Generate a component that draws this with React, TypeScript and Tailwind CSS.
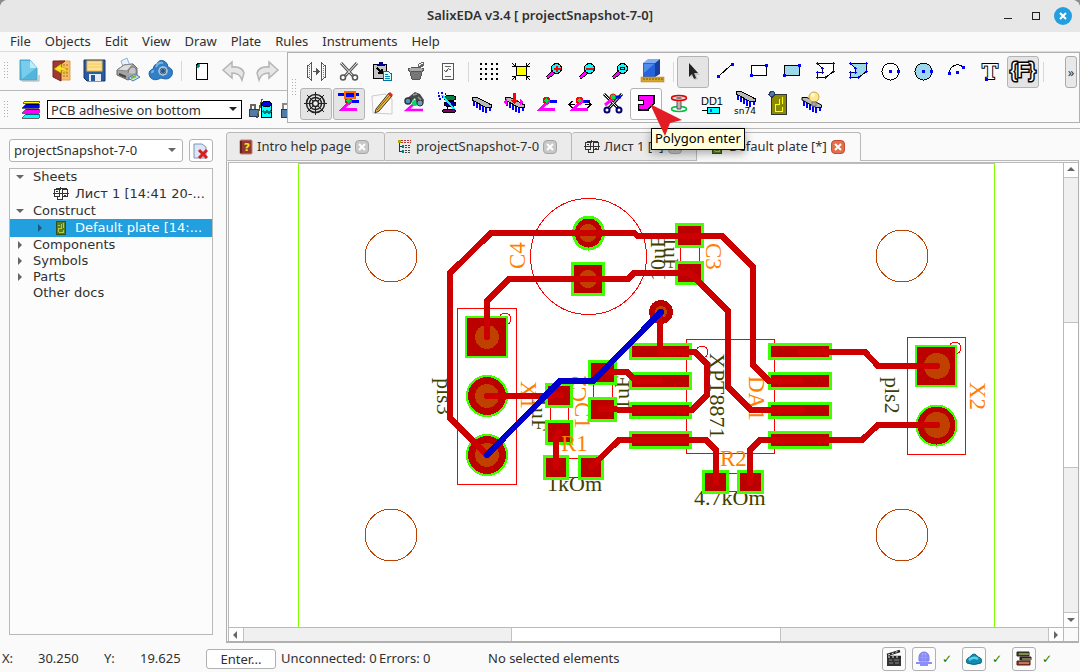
import type { ReactNode } from "react"

const menus = ["File", "Objects", "Edit", "View", "Draw", "Plate", "Rules", "Instruments", "Help"]

function Icon({ children, smooth = false }: { children: ReactNode; smooth?: boolean }) {
  return (
    <svg
      width="24"
      height="24"
      viewBox="0 0 24 24"
      fill="none"
      overflow="visible"
      shapeRendering={smooth ? "auto" : "crispEdges"}
      className="shrink-0"
      aria-hidden="true"
    >
      {children}
    </svg>
  )
}

function Dot({ x, y }: { x: number; y: number }) {
  return <rect x={x - 1} y={y - 1} width="3" height="3" fill="#0000ff" />
}

/* Two-segment track used as a base by the routing icons */
function Track() {
  return (
    <>
      <path d="M13 9.500H22" stroke="#0000ff" strokeWidth="3" />
      <path d="M20 17.500H5L13 10" stroke="#ff00ff" strokeWidth="3" />
      <circle cx="11.500" cy="8.500" r="3" fill="#00e040" stroke="#ff0000" strokeWidth="1.500" />
      <path d="M10 13L15 9" stroke="#ff00ff" strokeWidth="2" />
    </>
  )
}

function Chip() {
  return (
    <>
      <path d="M5 9v5M8 11v5M11 12v6M14 14v6M17 15v6M21 15v4" stroke="#0000ff" strokeWidth="2" />
      <path d="M3 5.500H8L22.500 13V15.500H17L3 8Z" fill="#b8b8b8" stroke="#000" />
    </>
  )
}

function Lens({ sign }: { sign: ReactNode }) {
  return (
    <>
      <path d="M5 18L12 11.500" stroke="#000" strokeWidth="4" />
      <path d="M5.500 17.500L12 11.500" stroke="#ff00ff" strokeWidth="2.600" />
      <circle cx="14.500" cy="8.500" r="5" fill="#00ffff" stroke="#000" />
      {sign}
    </>
  )
}

const fileIcons = [
  {
    name: "New project",
    icon: (
      <Icon smooth>
        <path d="M3 1H13L20 9V21H3Z" fill="#53b5dc" stroke="#4aa5ca" />
        <path d="M4 2H12L19 9L5 20Z" fill="#79cdec" />
        <path d="M13 1V9H20Z" fill="#c0ebf8" />
        <path d="M5 22H22V16" stroke="#aaa" strokeWidth="1" />
      </Icon>
    ),
  },
  {
    name: "Open project",
    icon: (
      <Icon smooth>
        <path d="M9 2H20V21H9Z" fill="#f5bd65" stroke="#dda15b" />
        <path d="M13 6H18M13 10H18M13 14H18M13 17H18" stroke="#b96a24" strokeDasharray="2 1" />
        <path d="M3 2H15L11 5V22L3 18Z" fill="#a13831" stroke="#74251f" />
        <path d="M17 14Q17 8 11 8V5L4 10L11 14V11Q14 11 17 14Z" fill="#f7e420" stroke="#a98c00" strokeWidth=".5" />
      </Icon>
    ),
  },
  {
    name: "Save project",
    icon: (
      <Icon smooth>
        <path d="M1 1H22V22H4L1 19Z" fill="#285da5" stroke="#17376c" />
        <rect x="4" y="2" width="15" height="10" fill="#ffe392" stroke="#f3b63b" />
        <path d="M5 5H18M5 8H18" stroke="#f6c75b" />
        <rect x="6" y="15" width="12" height="7" fill="#e8edf4" />
        <rect x="8" y="16" width="4" height="6" fill="#275898" />
      </Icon>
    ),
  },
  {
    name: "Print",
    icon: (
      <Icon smooth>
        <path d="M5 2L11 -1L14 7L8 10Z" fill="#e9f3ff" stroke="#8fb0d3" />
        <path d="M1 11L8 6L17 5L21 9V17L12 21L1 16Z" fill="#a4a4a4" stroke="#666" />
        <path d="M1 11L8 6L17 5L11 12Z" fill="#dedede" stroke="#888" />
        <path d="M12 14Q13 7 18 8Q21 9 20 15" fill="#c4c4c4" stroke="#777" />
        <path d="M3 15L10 18" stroke="#444" strokeWidth="2" />
        <path d="M12 19L19 15L24 18L17 22Z" fill="#bfe2f1" stroke="#567bb0" />
        <path d="M15 19L20 17" stroke="#73b829" strokeWidth="2" />
      </Icon>
    ),
  },
  {
    name: "Cloud settings",
    icon: (
      <Icon smooth>
        <path d="M1 18Q-2 12 4 10Q5 5 8 5Q10 0 15 2Q19 4 19 8Q25 10 23 16Q20 22 12 19Q5 23 1 18Z" fill="#317fc8" stroke="#2463a1" />
        <path d="M7 8Q9 3 14 4M3 14Q3 12 5 12" stroke="#75b5e6" strokeWidth="2" />
        <circle cx="14" cy="12" r="4" fill="#315e8b" stroke="#b3cad8" strokeWidth="1.500" />
        <path d="M14 7V17M9 12H19M10.500 8.500L17.500 15.500M17.500 8.500L10.500 15.500" stroke="#a9bcc9" strokeWidth=".8" />
        <circle cx="14" cy="12" r="2" fill="#275786" />
      </Icon>
    ),
  },
  null,
  {
    name: "New page",
    icon: (
      <Icon>
        <path d="M9 4H18V20H7V7Z" fill="#fff" stroke="#000" />
        <path d="M7 7L10 4V8H7Z" fill="#008080" stroke="#000" strokeWidth=".5" />
      </Icon>
    ),
  },
  {
    name: "Undo",
    icon: (
      <Icon smooth>
        <path d="M1 11L10 3V8Q20 7 22 14L20 21Q18 14 10 14V19Z" fill="#e6e6e6" stroke="#b5b5b5" strokeWidth="1.500" />
      </Icon>
    ),
  },
  {
    name: "Redo",
    icon: (
      <Icon smooth>
        <path d="M23 11L14 3V8Q4 7 2 14L4 21Q6 14 14 14V19Z" fill="#e6e6e6" stroke="#b5b5b5" strokeWidth="1.500" />
      </Icon>
    ),
  },
]

const polyPath = "M4.500 3.500H20.500V11.500L12.500 17.500H4.500V12.500H9.500V8.500L4.500 3.500Z"
const polyPoints = [
  [4, 3],
  [20, 3],
  [20, 11],
  [12, 17],
  [4, 17],
  [4, 12],
  [9, 12],
  [9, 8],
]

const drawIcons = [
  {
    name: "Mirror",
    icon: (
      <Icon>
        <path d="M3.500 6L7.500 3V20L3.500 17ZM21.500 6L17.500 3V20L21.500 17Z" stroke="#555" />
        <path d="M5.500 6V17M19.500 6V17" stroke="#777" strokeDasharray="1 1" />
        <path d="M9 11.500H15M12.500 9V14L15 11.500Z" fill="#555" stroke="#555" />
      </Icon>
    ),
  },
  {
    name: "Cut",
    icon: (
      <Icon smooth>
        <path d="M4 3L16 16M20 3L8 16" stroke="#555" strokeWidth="3" />
        <path d="M4 3L16 16M20 3L8 16" stroke="#f4f4f4" strokeWidth="1" />
        <circle cx="6" cy="17.500" r="2.500" stroke="#555" strokeWidth="1.500" />
        <circle cx="18" cy="17.500" r="2.500" stroke="#555" strokeWidth="1.500" />
      </Icon>
    ),
  },
  {
    name: "Paste",
    icon: (
      <Icon>
        <path d="M3.500 4.500H16.500V18.500H3.500Z" fill="#c6c6c6" stroke="#000" />
        <path d="M7 5H14V4H12V2H9V4H7Z" fill="#0000c0" stroke="#000080" />
        <path d="M7 8L12 13M12 9V13H8" stroke="#000" strokeWidth="1.500" />
        <path d="M13.500 11.500H18L21.500 14V20.500H13.500Z" fill="#d8ffff" stroke="#0070a0" />
        <path d="M15 14H18M15 16H20M15 18H20" stroke="#0090c0" />
      </Icon>
    ),
  },
  {
    name: "Delete",
    icon: (
      <Icon>
        <path d="M6 9H20L17 19H9Z" fill="#777" stroke="#555" />
        <ellipse cx="13" cy="9.500" rx="7.500" ry="2" fill="#aaa" stroke="#555" />
        <path d="M15 7Q15 2 21 3Q21 7 15 7ZM17 6L20 4" stroke="#666" />
      </Icon>
    ),
  },
  {
    name: "Properties",
    icon: (
      <Icon>
        <rect x="6.500" y="3.500" width="11" height="16" stroke="#555" />
        <path d="M9 6.500H15M9 16.500H15M13 9.500H15M8 10L10 12L13 8" stroke="#666" />
      </Icon>
    ),
  },
  null,
  {
    name: "Grid",
    icon: (
      <Icon>
        {[4, 9, 14, 19].map((y) => (
          <path key={y} d={`M4 ${y}h2M9 ${y}h2M15 ${y}h2M20 ${y}h2`} stroke="#000" strokeWidth="2" />
        ))}
      </Icon>
    ),
  },
  {
    name: "Zoom to fit",
    icon: (
      <Icon>
        <path d="M3 3L6 6M21 3L18 6M3 20L6 17M21 20L18 17M3 6.500H6.500V3M21 6.500H17.500V3M3 16.500H6.500V20M21 16.500H17.500V20" stroke="#000" />
        <rect x="7.500" y="6.500" width="10" height="9" fill="#ffff00" stroke="#000" />
      </Icon>
    ),
  },
  { name: "Zoom in", icon: <Icon><Lens sign={<path d="M11.500 9H18.500M15 5.500V12" stroke="#ff0000" strokeWidth="2" />} /></Icon> },
  { name: "Zoom out", icon: <Icon><Lens sign={<path d="M11 9H19" stroke="#ff0000" strokeWidth="2" />} /></Icon> },
  { name: "Zoom window", icon: <Icon><Lens sign={<rect x="12.500" y="7.500" width="4" height="2" stroke="#000" />} /></Icon> },
  {
    name: "3D view",
    icon: (
      <Icon smooth>
        <path d="M2 3L7 -1H19L14 3Z" fill="#80adf5" />
        <path d="M2 3H14V17H2Z" fill="#2463d9" />
        <path d="M14 3L19 -1V14L14 17Z" fill="#183e9f" />
        <path d="M3 4L13 4L3 13Z" fill="#518cec" />
        <rect x="0" y="17" width="23" height="5" fill="#d7a62b" stroke="#aa7d1d" strokeWidth=".5" />
        <path d="M3 18V20M6 18V20M9 18V20M12 18V20M15 18V20M18 18V20M21 18V20" stroke="#79520d" />
      </Icon>
    ),
  },
  null,
  {
    name: "Select",
    active: true,
    icon: (
      <Icon smooth>
        <path d="M10 5L19 15L15 15L17 19L14 20L12 16L10 18Z" fill="#999" opacity=".5" />
        <path d="M8 3L17 13L13 13L15 18L13 19L11 14L8 17Z" fill="#222" />
      </Icon>
    ),
  },
  {
    name: "Line",
    icon: (
      <Icon>
        <path d="M5 16L17 5" stroke="#000" />
        <Dot x={4} y={16} />
        <Dot x={18} y={4} />
      </Icon>
    ),
  },
  {
    name: "Rectangle",
    icon: (
      <Icon>
        <rect x="4.500" y="5.500" width="15" height="10" fill="#fff" stroke="#000" />
        <Dot x={4} y={15} />
        <Dot x={19} y={5} />
      </Icon>
    ),
  },
  {
    name: "Filled rectangle",
    icon: (
      <Icon>
        <rect x="4.500" y="5.500" width="15" height="10" fill="#9bd9ea" stroke="#000" />
        <Dot x={4} y={15} />
        <Dot x={19} y={5} />
      </Icon>
    ),
  },
  {
    name: "Polygon",
    icon: (
      <Icon>
        <path d={polyPath} fill="#fff" stroke="#000" />
        {polyPoints.map(([x, y]) => <path key={`${x}-${y}`} d={`M${x - 1} ${y + 0.5}h3M${x + 0.5} ${y - 1}v3`} stroke="#0000ff" />)}
      </Icon>
    ),
  },
  {
    name: "Filled polygon",
    icon: (
      <Icon>
        <path d={polyPath} fill="#9bd9ea" stroke="#000" />
        {polyPoints.map(([x, y]) => <path key={`${x}-${y}`} d={`M${x - 1} ${y + 0.5}h3M${x + 0.5} ${y - 1}v3`} stroke="#0000ff" />)}
      </Icon>
    ),
  },
  {
    name: "Circle",
    icon: (
      <Icon>
        <circle cx="11.500" cy="11.500" r="8.500" fill="#fff" stroke="#000" />
        <Dot x={11} y={11} />
        <Dot x={19} y={11} />
      </Icon>
    ),
  },
  {
    name: "Filled circle",
    icon: (
      <Icon>
        <circle cx="11.500" cy="11.500" r="8.500" fill="#9bd9ea" stroke="#000" />
        <Dot x={11} y={11} />
        <Dot x={19} y={11} />
      </Icon>
    ),
  },
  {
    name: "Arc",
    icon: (
      <Icon>
        <path d="M4.500 13A8 8 0 0 1 18 7" stroke="#000" />
        <Dot x={4} y={13} />
        <Dot x={18} y={7} />
        <Dot x={12} y={12} />
      </Icon>
    ),
  },
  {
    name: "Text",
    icon: (
      <Icon>
        <text x="12" y="19" textAnchor="middle" fontFamily="DejaVu Serif, serif" fontSize="21" fontWeight="bold" fill="#fff" stroke="#000" strokeWidth="2" paintOrder="stroke">T</text>
        <Dot x={8} y={19} />
      </Icon>
    ),
  },
  {
    name: "Formatted text",
    active: true,
    icon: (
      <Icon>
        <text x="12" y="17" textAnchor="middle" fontFamily="Liberation Sans, sans-serif" fontSize="20" fill="#fff" stroke="#000" strokeWidth="3" paintOrder="stroke">{"{F}"}</text>
      </Icon>
    ),
  },
  null,
]

const plateIcons = [
  {
    name: "Show ratsnest",
    active: true,
    icon: (
      <Icon smooth>
        <path d="M0 11.500H23M11.500 0V23M3 3L20 20M20 3L3 20" stroke="#222" />
        <circle cx="11.500" cy="11.500" r="9" stroke="#222" strokeWidth="1.500" />
        <circle cx="11.500" cy="11.500" r="6" stroke="#222" strokeWidth="1.500" />
        <circle cx="11.500" cy="11.500" r="3" fill="#eee" stroke="#222" strokeWidth="1.500" />
      </Icon>
    ),
  },
  {
    name: "Wire rules",
    active: true,
    icon: (
      <Icon>
        <Track />
        <path d="M1 2.500H22" stroke="#0000ff" strokeWidth="3" />
        <rect x="8" y="0" width="10" height="6" fill="#0000ff" stroke="#ff6600" strokeWidth="2" />
      </Icon>
    ),
  },
  {
    name: "Edit",
    icon: (
      <Icon smooth>
        <path d="M2 4L15 2L22 7V22L3 21Z" fill="#fafafa" stroke="#ccc" />
        <path d="M6 17L19 1L22 4L9 19L5 21Z" fill="#f1bd39" stroke="#333" />
        <path d="M19 1L22 4" stroke="#c83025" strokeWidth="3" />
        <path d="M7 18L20 3" stroke="#815d18" />
      </Icon>
    ),
  },
  {
    name: "Find wire",
    icon: (
      <Icon smooth>
        <path d="M20 18H4L13 10" stroke="#ff00ff" strokeWidth="2.500" />
        <circle cx="12" cy="11" r="3" fill="#00df60" />
        <path d="M2 8L12 0L17 2L21 8L20 13L14 12L12 6L6 12Z" fill="#454a4d" />
        <circle cx="5" cy="9" r="3" fill="#4a96bf" stroke="#333" strokeWidth="1.500" />
        <circle cx="17" cy="11" r="3" fill="#669cb7" stroke="#333" />
        <path d="M10 3L14 2M15 5L18 8" stroke="#999" strokeWidth="1.500" />
      </Icon>
    ),
  },
  {
    name: "Layers",
    icon: (
      <Icon>
        <path d="M11 7V18M16 7V18" stroke="#000" />
        <ellipse cx="14" cy="6" rx="6" ry="2.500" fill="#008040" stroke="#000" />
        <ellipse cx="14" cy="12" rx="6" ry="2.500" fill="#0000a0" stroke="#000" />
        <ellipse cx="13" cy="19" rx="7" ry="2" fill="#800060" stroke="#000" />
        <path d="M6 3L18 17" stroke="#00ffff" strokeWidth="2" />
        <path d="M2 1H3M5 1H7M9 2H10M2 4H4M6 5H7M3 7H5" stroke="#0000ff" strokeWidth="1.500" />
      </Icon>
    ),
  },
  { name: "Place component", icon: <Icon><Chip /></Icon> },
  {
    name: "Move component",
    icon: (
      <Icon>
        <Chip />
        <path d="M12.500 1V8" stroke="#ff0000" strokeWidth="3" />
        <path d="M8 8H17L12.500 12Z" fill="#ff0000" />
        <path d="M1 10L5 7V13ZM22 10L18 7V13Z" fill="#ff00ff" />
      </Icon>
    ),
  },
  { name: "Route wire", icon: <Icon><Track /></Icon> },
  {
    name: "Move wire",
    icon: (
      <Icon>
        <Track />
        <path d="M1 12.500H7M17 12.500H23M4 9L1 12.500L4 16M20 9L23 12.500L20 16" stroke="#000" strokeWidth="1.500" />
      </Icon>
    ),
  },
  {
    name: "Cut wire",
    icon: (
      <Icon smooth>
        <path d="M3 2L17 16M21 2L8 16" stroke="#000" strokeWidth="3" />
        <path d="M3 2L17 16M21 2L8 16" stroke="#fff" />
        <circle cx="6" cy="18" r="2.500" stroke="#000070" strokeWidth="2" />
        <circle cx="18" cy="18" r="2.500" stroke="#000070" strokeWidth="2" />
        <path d="M4 13L14 5" stroke="#ff00ff" strokeWidth="3" />
        <circle cx="12" cy="5" r="3" fill="#00df40" stroke="#ff0000" />
        <path d="M15 5H20" stroke="#0000ff" strokeWidth="3" />
      </Icon>
    ),
  },
  {
    name: "Polygon enter",
    hover: true,
    icon: <Icon><path d="M4.500 3.500H20V11L14 18H4.500V12.500H9.500V8.500H4.500Z" fill="#ff00ff" stroke="#000" strokeWidth="1.500" /></Icon>,
  },
  {
    name: "Via",
    icon: (
      <Icon smooth>
        <ellipse cx="12" cy="17" rx="7.500" ry="2.500" fill="#fff" stroke="#00c040" strokeWidth="1.500" />
        <path d="M10 7V17H14V7Z" fill="#c8b0b0" stroke="#555" />
        <ellipse cx="12" cy="6" rx="7.500" ry="2.500" fill="#ddd" stroke="#e00000" strokeWidth="1.500" />
        <ellipse cx="12" cy="6" rx="3" ry="1" fill="#777" />
      </Icon>
    ),
  },
  {
    name: "Reference name",
    icon: (
      <Icon>
        <text x="12" y="13" textAnchor="middle" fontFamily="Liberation Sans, sans-serif" fontSize="11" fill="#000">DD1</text>
        <path d="M2 18.500H7" stroke="#000" />
        <path d="M7.500 15.500H19.500V21.500H7.500Z" fill="#00ffff" stroke="#000" />
        <path d="M11 17V20" stroke="#0040ff" strokeWidth="2" />
      </Icon>
    ),
  },
  {
    name: "Part name",
    icon: (
      <Icon>
        <g transform="translate(0 -6)"><Chip /></g>
        <text x="12" y="22" textAnchor="middle" fontFamily="DejaVu Sans, sans-serif" fontSize="9" fill="#000">sn74</text>
      </Icon>
    ),
  },
  {
    name: "Plate contour",
    icon: (
      <Icon>
        <rect x="5.500" y="2.500" width="15" height="20" fill="#8a8a00" stroke="#333" />
        <path d="M9 19.500V12.500H13.500V6.500M16.500 5V12M9 19.500H16.500V15" stroke="#ffff00" />
        <path d="M2 2H10M6 -1V6" stroke="#224" />
        <circle cx="6" cy="2" r="2.500" fill="#5278aa" stroke="#223d67" />
      </Icon>
    ),
  },
  {
    name: "Highlight",
    icon: (
      <Icon smooth>
        <Chip />
        <circle cx="15" cy="5" r="5" fill="#ffe78b" stroke="#c9a94b" />
        <circle cx="14" cy="3" r="2" fill="#fff8db" />
        <path d="M13 10H17V14H13Z" fill="#aaa" stroke="#777" />
      </Icon>
    ),
  },
]

type Tool = { name: string; icon: ReactNode; active?: boolean; hover?: boolean } | null

function Tools({ items }: { items: Tool[] }) {
  return items.map((item, i) =>
    item ? (
      <button
        key={item.name}
        type="button"
        aria-label={item.name}
        className={
          item.active
            ? "flex h-8 w-8 shrink-0 items-center justify-center rounded-[3px] border border-[#b4b4b4] bg-[#e4e4e4]"
            : item.hover
              ? "flex h-8 w-8 shrink-0 items-center justify-center rounded-[3px] border border-[#b4b4b4] bg-white"
              : "flex h-8 w-8 shrink-0 items-center justify-center"
        }
      >
        {item.icon}
      </button>
    ) : (
      <div key={i} className="flex w-1.5 shrink-0 justify-center">
        <div className="h-5 w-px bg-[#d8d8d8]" />
      </div>
    )
  )
}

function Handle() {
  return (
    <svg width="5" height="18" className="mr-[3px] shrink-0" shapeRendering="crispEdges" aria-hidden="true">
      <path d="M.5 0V18M3.500 0V18" stroke="#b0b0b0" strokeDasharray="1 2" />
    </svg>
  )
}

function SheetIcon() {
  return (
    <svg width="16" height="16" viewBox="0 0 16 16" fill="none" stroke="#333" shapeRendering="crispEdges" className="shrink-0" aria-hidden="true">
      <path d="M1.500 3.500H6.500V10.500H1.500ZM9.500 3.500H14.500V10.500H9.500ZM0 7.500H16M3.500 3V2.500H13.500V3M4.500 11V13.500H9.500V11M7.500 1V4M3 5.500H5M11 9.500H13" />
    </svg>
  )
}

function PlateIcon() {
  return (
    <svg width="16" height="16" viewBox="0 0 16 16" fill="none" shapeRendering="crispEdges" className="shrink-0" aria-hidden="true">
      <rect x="3.500" y="1.500" width="9" height="13" fill="#577f22" stroke="#31501b" />
      <path d="M5.500 12V8.500H8.500V4M10.500 3V8M6 12.500H10.500V10M5 5.500H7" stroke="#b7cc3c" />
    </svg>
  )
}

function Arrow({ dir, fill = "#666" }: { dir: "up" | "down" | "left" | "right"; fill?: string }) {
  const paths = { up: "M1 6L5 2L9 6Z", down: "M1 3L5 7L9 3Z", left: "M6 1L2 5L6 9Z", right: "M3 1L7 5L3 9Z" }
  return (
    <svg width="10" height="10" viewBox="0 0 10 10" fill={fill} className="shrink-0" aria-hidden="true">
      <path d={paths[dir]} />
    </svg>
  )
}

const tabs = [
  {
    label: "Intro help page",
    width: "w-[159px]",
    icon: (
      <svg width="14" height="16" viewBox="0 0 14 16" className="shrink-0" aria-hidden="true">
        <rect x="1" y="1" width="12" height="14" rx="1" fill="#943932" stroke="#be8177" />
        <path d="M2 2V14" stroke="#642520" strokeWidth="2" />
        <text x="8" y="12" textAnchor="middle" fontFamily="DejaVu Sans, sans-serif" fontSize="11" fontWeight="bold" fill="#f4e51e">?</text>
      </svg>
    ),
  },
  {
    label: "projectSnapshot-7-0",
    width: "w-[187px]",
    icon: (
      <svg width="15" height="16" viewBox="0 0 15 16" fill="none" shapeRendering="crispEdges" className="shrink-0" aria-hidden="true">
        <path d="M2.500 3V12.500H5M3 7.500H5" stroke="#333" />
        <path d="M4 1.500H14M4 3.500H14" stroke="#b33" strokeDasharray="2 1" />
        <path d="M8 6.500H14M8 8.500H14M8 11.500H14M8 13.500H14" stroke="#444" strokeDasharray="2 1" />
        <path d="M1 1H4V4H1Z" fill="#aaaa00" />
        <path d="M5 6H7V9H5ZM5 11H7V14H5Z" fill="#008080" />
      </svg>
    ),
  },
  { label: "Лист 1 [*]", width: "w-[125px]", icon: <SheetIcon /> },
  { label: "Default plate [*]", width: "w-[164px]", icon: <PlateIcon />, current: true },
]

const tree = [
  { label: "Sheets", open: true },
  { label: "Лист 1 [14:41 20-...", child: true, icon: <SheetIcon /> },
  { label: "Construct", open: true },
  { label: "Default plate [14:...", child: true, selected: true, icon: <PlateIcon /> },
  { label: "Components", open: false },
  { label: "Symbols", open: false },
  { label: "Parts", open: false },
  { label: "Other docs" },
]

// Rectangular pads: left, top, right, bottom of the mask opening
const rectPads = [
  [571, 262, 605, 296],
  [675, 223, 704, 248],
  [675, 261, 704, 285],
  [588, 360, 617, 385],
  [588, 397, 617, 422],
  [545, 383, 573, 408],
  [545, 420, 573, 445],
  [543, 455, 569, 480],
  [578, 455, 604, 480],
  [702, 470, 729, 494],
  [737, 470, 764, 494],
  [629, 343, 692, 360],
  [629, 372, 692, 390],
  [629, 402, 692, 419],
  [629, 431, 692, 449],
  [768, 343, 832, 360],
  [768, 372, 832, 390],
  [768, 402, 832, 419],
  [768, 431, 832, 449],
]

const drills = [
  [487, 337, 12],
  [487, 396, 12],
  [487, 455, 12],
  [588, 233, 9],
  [588, 279, 9],
  [661, 312, 6],
  [937, 366, 13],
  [937, 425, 13],
]

const tracks = [
  "M487 455L450 418V273L491 233H634L638 236H722L753 267V365L769 381H800",
  "M487 337V301L509 279H628L634 273H690L728 311V387L751 410H802",
  "M487 396H547L561 395",
  "M660 312V352H695L707 364V395L692 410H634L600 409",
  "M602 372H627L636 381H660",
  "M559 432L556 438V467",
  "M591 467L619 440H706L716 450V482",
  "M750 482V450L760 440H862L878 425H937",
  "M800 352H865L878 366H937",
]

// x, y is the start of the baseline
const values = [
  { text: "pls3", x: 437, y: 378, turn: 90 },
  { text: "1uF", x: 532, y: 397, turn: 90 },
  { text: "1uF", x: 629, y: 410, turn: -90 },
  { text: "1uF", x: 664, y: 236, turn: 90 },
  { text: "10uF", x: 665, y: 281, turn: -90 },
  { text: "XPT8871", x: 710, y: 353, turn: 90 },
  { text: "pls2", x: 885, y: 377, turn: 90 },
  { text: "1kOm", x: 547, y: 491, turn: 0 },
  { text: "4.7kOm", x: 694, y: 505, turn: 0 },
]

const names = [
  { text: "C4", x: 525, y: 269, turn: -90 },
  { text: "C3", x: 706, y: 243, turn: 90 },
  { text: "X1", x: 521, y: 381, turn: 90 },
  { text: "C2", x: 586, y: 402, turn: -90 },
  { text: "C1", x: 575, y: 402, turn: 90 },
  { text: "DA1", x: 749, y: 376, turn: 90 },
  { text: "X2", x: 970, y: 382, turn: 90 },
  { text: "R2", x: 720, y: 466, turn: 0 },
]

function Board() {
  return (
    <svg width="100%" height="100%" className="block" role="img" aria-label="Default plate">
      <g transform="translate(-229 -163)" fill="none" shapeRendering="crispEdges">
        <path d="M298.500 700V163.500H994.500V700" stroke="#80ff00" />
        <g stroke="#c04000">
          <circle cx="391" cy="256" r="26" />
          <circle cx="902" cy="256" r="26" />
          <circle cx="391" cy="535" r="26" />
          <circle cx="902" cy="535" r="26" />
        </g>
        <g stroke="#ff0000">
          <circle cx="588.500" cy="256.500" r="58" />
          <path d="M457.500 308.500H516.500V484.500H457.500ZM686.500 339.500H774.500V453.500H686.500ZM907.500 337.500H965.500V454.500H907.500Z" />
          <path d="M680.500 248V261M699.500 248V261M593.500 384V397M612.500 384V397M550.500 407V420M568.500 407V420M569 458.500H578M569 477.500H578M729 473.500H737M729 491.500H737" />
          <circle cx="505" cy="319" r="6" />
          <circle cx="702" cy="352" r="6" />
          <circle cx="955" cy="348" r="6" />
        </g>
        <g fill="#404000" fontFamily="Liberation Serif, serif" fontSize="22">
          {values.map((v) => (
            <text key={`${v.x}-${v.y}`} transform={`translate(${v.x} ${v.y}) rotate(${v.turn})`}>{v.text}</text>
          ))}
        </g>
        <g fill="#ff8000" fontFamily="Liberation Serif, serif" fontSize="23">
          {names.map((n) => (
            <text key={n.text} transform={`translate(${n.x} ${n.y}) rotate(${n.turn})`}>{n.text}</text>
          ))}
        </g>
        <g fill="#bb0000" stroke="#40ff00">
          {rectPads.map(([l, t, r, b]) => (
            <rect key={`${l}-${t}`} x={l + 1.5} y={t + 1.5} width={r - l - 3} height={b - t - 3} strokeWidth="3" />
          ))}
          <rect x="466" y="317" width="41" height="40" strokeWidth="2" />
          <rect x="916" y="346" width="40" height="40" strokeWidth="2" />
          <circle cx="487" cy="396" r="20" strokeWidth="2" />
          <circle cx="487" cy="455" r="20" strokeWidth="2" />
          <ellipse cx="588.500" cy="233" rx="15" ry="16" strokeWidth="3" />
          <circle cx="936.500" cy="425.500" r="20" strokeWidth="2" />
        </g>
        <circle cx="661" cy="312" r="12" fill="#bb0000" />
        {drills.map(([x, y, r]) => (
          <circle key={`${x}-${y}`} cx={x} cy={y} r={r} fill="#c04000" />
        ))}
        <g stroke="#cc0000" strokeWidth="6" strokeLinecap="round" strokeLinejoin="round">
          {tracks.map((d) => (
            <path key={d} d={d} />
          ))}
        </g>
        <path d="M661 312L593 381H560L487 455" stroke="#0000cc" strokeWidth="6" strokeLinecap="round" strokeLinejoin="round" />
        <text x="561" y="451" fill="#ff8000" fontFamily="Liberation Serif, serif" fontSize="23">R1</text>
      </g>
    </svg>
  )
}

const services = [
  {
    name: "Record video",
    icon: (
      <Icon smooth>
        <path d="M5 9H19V19H5Z" fill="#333" />
        <path d="M5 8L18 4M5 10H19" stroke="#222" strokeWidth="2.500" />
        <path d="M6 8L17 4M6 10H18" stroke="#eee" strokeDasharray="2 2" />
        <path d="M7 13H10M12 13H17M7 16H11M13 16H17" stroke="#888" />
      </Icon>
    ),
  },
  {
    name: "Network",
    check: true,
    icon: (
      <Icon smooth>
        <path d="M7 14V10A5 5 0 0 1 17 10V14Z" fill="#a5a7ff" stroke="#7779ee" />
        <path d="M12 5V15M9 6V15M15 6V15M7 9H17M7 12H17" stroke="#7779ee" strokeWidth=".7" />
        <path d="M4 16H20M8 18H16" stroke="#8b8dff" strokeWidth="2" />
      </Icon>
    ),
  },
  {
    name: "Cloud",
    check: true,
    icon: (
      <Icon smooth>
        <path d="M5 16Q3 12 8 10Q12 4 16 10Q21 11 19 16Q12 19 5 16Z" fill="#128bb0" stroke="#0c6580" />
        <path d="M7 13Q11 9 16 12" stroke="#55d4ef" strokeWidth="2.500" />
      </Icon>
    ),
  },
  {
    name: "Library",
    check: true,
    icon: (
      <Icon smooth>
        <path d="M5 5H17V9H5Z" fill="#3f4d25" stroke="#222" />
        <path d="M8 10H19V13H8Z" fill="#282015" stroke="#222" />
        <path d="M5 14H18V18H5Z" fill="#943a29" stroke="#511e17" />
        <path d="M7 7H17M10 12H19M7 16H17" stroke="#d8c182" />
      </Icon>
    ),
  },
]

export default function App() {
  return (
    <div className="h-screen bg-[#8d8d8d] font-['Noto_Sans',sans-serif] text-[13px] text-[#303030]">
      <div className="flex h-full flex-col overflow-hidden rounded-t-lg bg-[#fafafa]">
        {/* Title bar */}
        <header className="grid h-8 shrink-0 grid-cols-[1fr_auto_1fr] items-center bg-[#e7e7e7]">
          <h1 className="col-start-2 text-[13px] font-semibold">SalixEDA v3.4 [ projectSnapshot-7-0]</h1>
          <div className="flex items-center justify-end gap-4 pr-2">
            <button type="button" aria-label="Minimize">
              <svg width="12" height="12" shapeRendering="crispEdges"><path d="M2 8.500H10" stroke="#222" /></svg>
            </button>
            <button type="button" aria-label="Maximize">
              <svg width="12" height="12" shapeRendering="crispEdges"><path d="M2.500 2.500H9.500V9.500H2.500Z" fill="none" stroke="#222" /></svg>
            </button>
            <button type="button" aria-label="Close" className="-ml-1 flex h-[18px] w-[18px] items-center justify-center rounded-full bg-[#219fdf]">
              <svg width="8" height="8"><path d="M1 1L7 7M7 1L1 7" stroke="#fff" strokeWidth="2" /></svg>
            </button>
          </div>
        </header>

        {/* Menu */}
        <nav className="flex h-5 shrink-0 items-start gap-3.5 border-b border-[#dcdcdc] px-2.5">
          {menus.map((menu) => (
            <button key={menu} type="button" className="leading-[18px]">{menu}</button>
          ))}
        </nav>

        {/* Toolbars */}
        <div className="flex h-[77px] shrink-0 border-b border-[#b9b9b9]">
          <div className="flex w-[287px] shrink-0 flex-col overflow-hidden">
            <div className="flex h-[39px] shrink-0 items-center gap-px border-b border-[#b9b9b9] pl-1">
              <Handle />
              <Tools items={fileIcons} />
            </div>
            <div className="flex flex-1 items-center pl-1">
              <Handle />
              <svg width="35" height="20" viewBox="0 0 35 20" shapeRendering="crispEdges" className="shrink-0" aria-hidden="true">
                <g transform="translate(10 0)" stroke="#000" strokeWidth=".6">
                  <path d="M0 18L4 14H17V18Z" fill="#00ffff" />
                  <path d="M0 13L4 9H17V13Z" fill="#ff00ff" />
                  <path d="M0 8L4 4H17V8Z" fill="#0000ff" />
                  <path d="M1 3L3 1H17V3Z" fill="#ffff00" />
                </g>
              </svg>
              <div className="relative h-[19px] w-[195px] shrink-0">
                <select aria-label="Layer" className="block h-full w-full appearance-none border border-black bg-white pr-4 pl-[3px] leading-4 outline-none">
                  <option>PCB adhesive on bottom</option>
                </select>
                <span className="pointer-events-none absolute top-1 right-1"><Arrow dir="down" fill="#222" /></span>
              </div>
              <button type="button" aria-label="Lock or remove" className="ml-1.5 shrink-0">
                <Icon>
                  <path d="M3 11V7H7V11" stroke="#666" strokeWidth="1.500" />
                  <rect x="1" y="11" width="9" height="7" fill="#527ca8" stroke="#335" />
                  <path d="M9 20L14 1" stroke="#5c5c22" strokeWidth="1.500" />
                  <path d="M13.500 6H23.500V19H13.500Z" fill="#00ffff" stroke="#000" />
                  <ellipse cx="18.500" cy="6" rx="5" ry="2.500" fill="#0000e0" stroke="#000" />
                  <path d="M15 13L17 15L19 13L21 15L23 13" stroke="#007070" strokeWidth="1.500" />
                </Icon>
              </button>
              <button type="button" aria-label="Lock all" className="ml-1 shrink-0">
                <Icon>
                  <path d="M7 11V6H12V11" stroke="#888" strokeWidth="2" />
                  <rect x="5" y="11" width="10" height="8" fill="#527ca8" stroke="#335" />
                </Icon>
              </button>
            </div>
          </div>

          <div className="relative flex h-[71px] min-w-0 flex-1 items-center border border-[#b0b0b0] pl-1">
            <Handle />
            <div className="flex min-w-0 flex-1 flex-col">
              <div className="flex items-center gap-px">
                <Tools items={drawIcons} />
                <button type="button" aria-label="More tools" className="mr-0.5 ml-auto h-8 w-3 shrink-0 rounded-[3px] border border-[#aaa] bg-[#e8e8e8] text-center leading-7">
                  »
                </button>
              </div>
              <div className="flex items-center gap-px">
                <Tools items={plateIcons} />
              </div>
            </div>
            <div role="tooltip" className="absolute top-[75px] left-[363px] z-20 h-[22px] border border-black bg-[#ffffdc] px-[3px] leading-[19px] whitespace-nowrap text-black shadow-[0_3px_10px_rgba(0,0,0,0.35)]">
              Polygon enter
            </div>
            <svg width="34" height="34" viewBox="0 0 34 34" className="absolute top-[50px] left-[361px] z-30" aria-hidden="true">
              <path d="M1 1L33 17L21 20L16 33Z" fill="#e21b24" />
            </svg>
          </div>
        </div>

        <div className="flex min-h-0 flex-1">
          {/* Project tree */}
          <aside className="flex w-[226px] shrink-0 flex-col pt-2.5 pr-[13px] pb-2 pl-[9px]">
            <div className="flex items-center gap-1.5">
              <div className="relative h-[23px] min-w-0 flex-1">
                <select aria-label="Project" className="block h-full w-full appearance-none rounded-[3px] border border-[#b4b4b4] bg-white pl-1 outline-none">
                  <option>projectSnapshot-7-0</option>
                </select>
                <span className="pointer-events-none absolute top-1.5 right-1.5"><Arrow dir="down" /></span>
              </div>
              <button type="button" aria-label="Close project" className="flex h-[23px] w-6 items-center justify-center rounded-[3px] border border-[#b4b4b4] bg-white">
                <svg width="16" height="16" viewBox="0 0 16 16" aria-hidden="true">
                  <path d="M1 1H9L13 4V15H1Z" fill="#dbe7f6" stroke="#7d95b5" />
                  <path d="M6 7L14 15M14 7L6 15" stroke="#d72020" strokeWidth="3" />
                </svg>
              </button>
            </div>
            <ul className="mt-1.5 flex-1 border border-[#b9b9b9] bg-[#fcfcfc] font-['DejaVu_Sans',sans-serif]">
              {tree.map((node) => (
                <li
                  key={node.label}
                  className={
                    node.selected
                      ? "flex h-[18px] items-center bg-[#219fdf] pl-[25px] whitespace-nowrap text-white"
                      : node.child
                        ? "flex h-[18px] items-center pl-[25px] whitespace-nowrap"
                        : "flex h-4 items-center pl-[5px] whitespace-nowrap"
                  }
                >
                  <span className="w-[18px] shrink-0">
                    {node.selected ? <Arrow dir="right" fill="#17597f" /> : node.open !== undefined && <Arrow dir={node.open ? "down" : "right"} />}
                  </span>
                  {node.icon && <span className="flex w-[22px] shrink-0">{node.icon}</span>}
                  <span className="leading-4">{node.label}</span>
                </li>
              ))}
            </ul>
          </aside>

          {/* Editor */}
          <main className="flex min-w-0 flex-1 flex-col pt-[3px] pr-px">
            <div className="flex h-[29px] shrink-0">
              {tabs.map((tab) => (
                <div
                  key={tab.label}
                  className={`${tab.width} flex shrink-0 items-center rounded-t-[3px] border-t border-r border-[#b9b9b9] pl-3 first:border-l ${tab.current ? "bg-[#fafafa]" : "border-b bg-[#ebebeb]"}`}
                >
                  {tab.icon}
                  <button type="button" className="mr-1 ml-1 whitespace-nowrap">{tab.label}</button>
                  <button
                    type="button"
                    aria-label={`Close ${tab.label}`}
                    className={`flex h-[14px] w-[14px] shrink-0 items-center justify-center rounded-sm border ${tab.current ? "border-[#cc4a30] bg-[#e1704f]" : "border-[#a5a5a5] bg-[#c8c8c8]"}`}
                  >
                    <svg width="8" height="8"><path d="M1 1L7 7M7 1L1 7" stroke="#fff" strokeWidth="2" /></svg>
                  </button>
                </div>
              ))}
              <div className="flex-1 border-b border-[#b9b9b9]" />
            </div>
            <div className="flex min-h-0 flex-1 flex-col border-r border-b-2 border-l border-[#b0b0b0] pt-px pl-px">
              <div className="grid min-h-0 flex-1 grid-cols-[1fr_15px] grid-rows-[1fr_14px] border-t border-l border-[#b9b9b9] bg-white">
                <div className="min-h-0 min-w-0 overflow-hidden">
                  <Board />
                </div>
                <div className="flex flex-col border-l border-[#b9b9b9]">
                  <button type="button" aria-label="Scroll up" className="flex h-3.5 items-center justify-center"><Arrow dir="up" /></button>
                  <div className="flex-1 border-y border-[#c2c2c2] bg-[#f0f0f0]" />
                  <div className="flex-1 bg-white" />
                  <div className="flex-1 border-y border-[#c2c2c2] bg-[#f0f0f0]" />
                  <button type="button" aria-label="Scroll down" className="flex h-3.5 items-center justify-center"><Arrow dir="down" /></button>
                </div>
                <div className="flex border-t border-[#b9b9b9]">
                  <button type="button" aria-label="Scroll left" className="flex w-3.5 items-center justify-center"><Arrow dir="left" /></button>
                  <div className="flex-1 border-x border-[#c2c2c2] bg-[#f0f0f0]" />
                  <div className="flex-1 bg-white" />
                  <div className="flex-1 border-x border-[#c2c2c2] bg-[#f0f0f0]" />
                  <button type="button" aria-label="Scroll right" className="flex w-3.5 items-center justify-center"><Arrow dir="right" /></button>
                </div>
                <div className="border-t border-l border-[#b9b9b9] bg-[#fafafa]" />
              </div>
            </div>
          </main>
        </div>

        {/* Status bar */}
        <footer className="flex h-[29px] shrink-0 items-center pt-0.5 pr-[18px] pl-0.5">
          <span className="w-9">X:</span>
          <span className="w-[66px]">30.250</span>
          <span className="w-9">Y:</span>
          <span className="w-[66px]">19.625</span>
          <button type="button" className="mr-[5px] h-5 w-[70px] rounded-[3px] border border-[#b0b0b0] bg-white leading-4">Enter...</button>
          <span className="w-[98px] whitespace-nowrap">Unconnected: 0</span>
          <span className="w-[109px] whitespace-nowrap">Errors: 0</span>
          <span className="whitespace-nowrap">No selected elements</span>
          <div className="ml-auto flex items-center">
            {services.map((s) => (
              <div key={s.name} className={s.check ? "flex w-[50px] items-center" : "flex w-[30px] items-center"}>
                <button type="button" aria-label={s.name} className="flex h-6 w-6 items-center justify-center overflow-hidden rounded-[3px] border border-[#b0b0b0] bg-[#fcfcfc]">
                  {s.icon}
                </button>
                {s.check && <span className="ml-1.5 font-['DejaVu_Sans',sans-serif] text-[12px] text-[#008000]">✓</span>}
              </div>
            ))}
          </div>
        </footer>
      </div>
    </div>
  )
}
